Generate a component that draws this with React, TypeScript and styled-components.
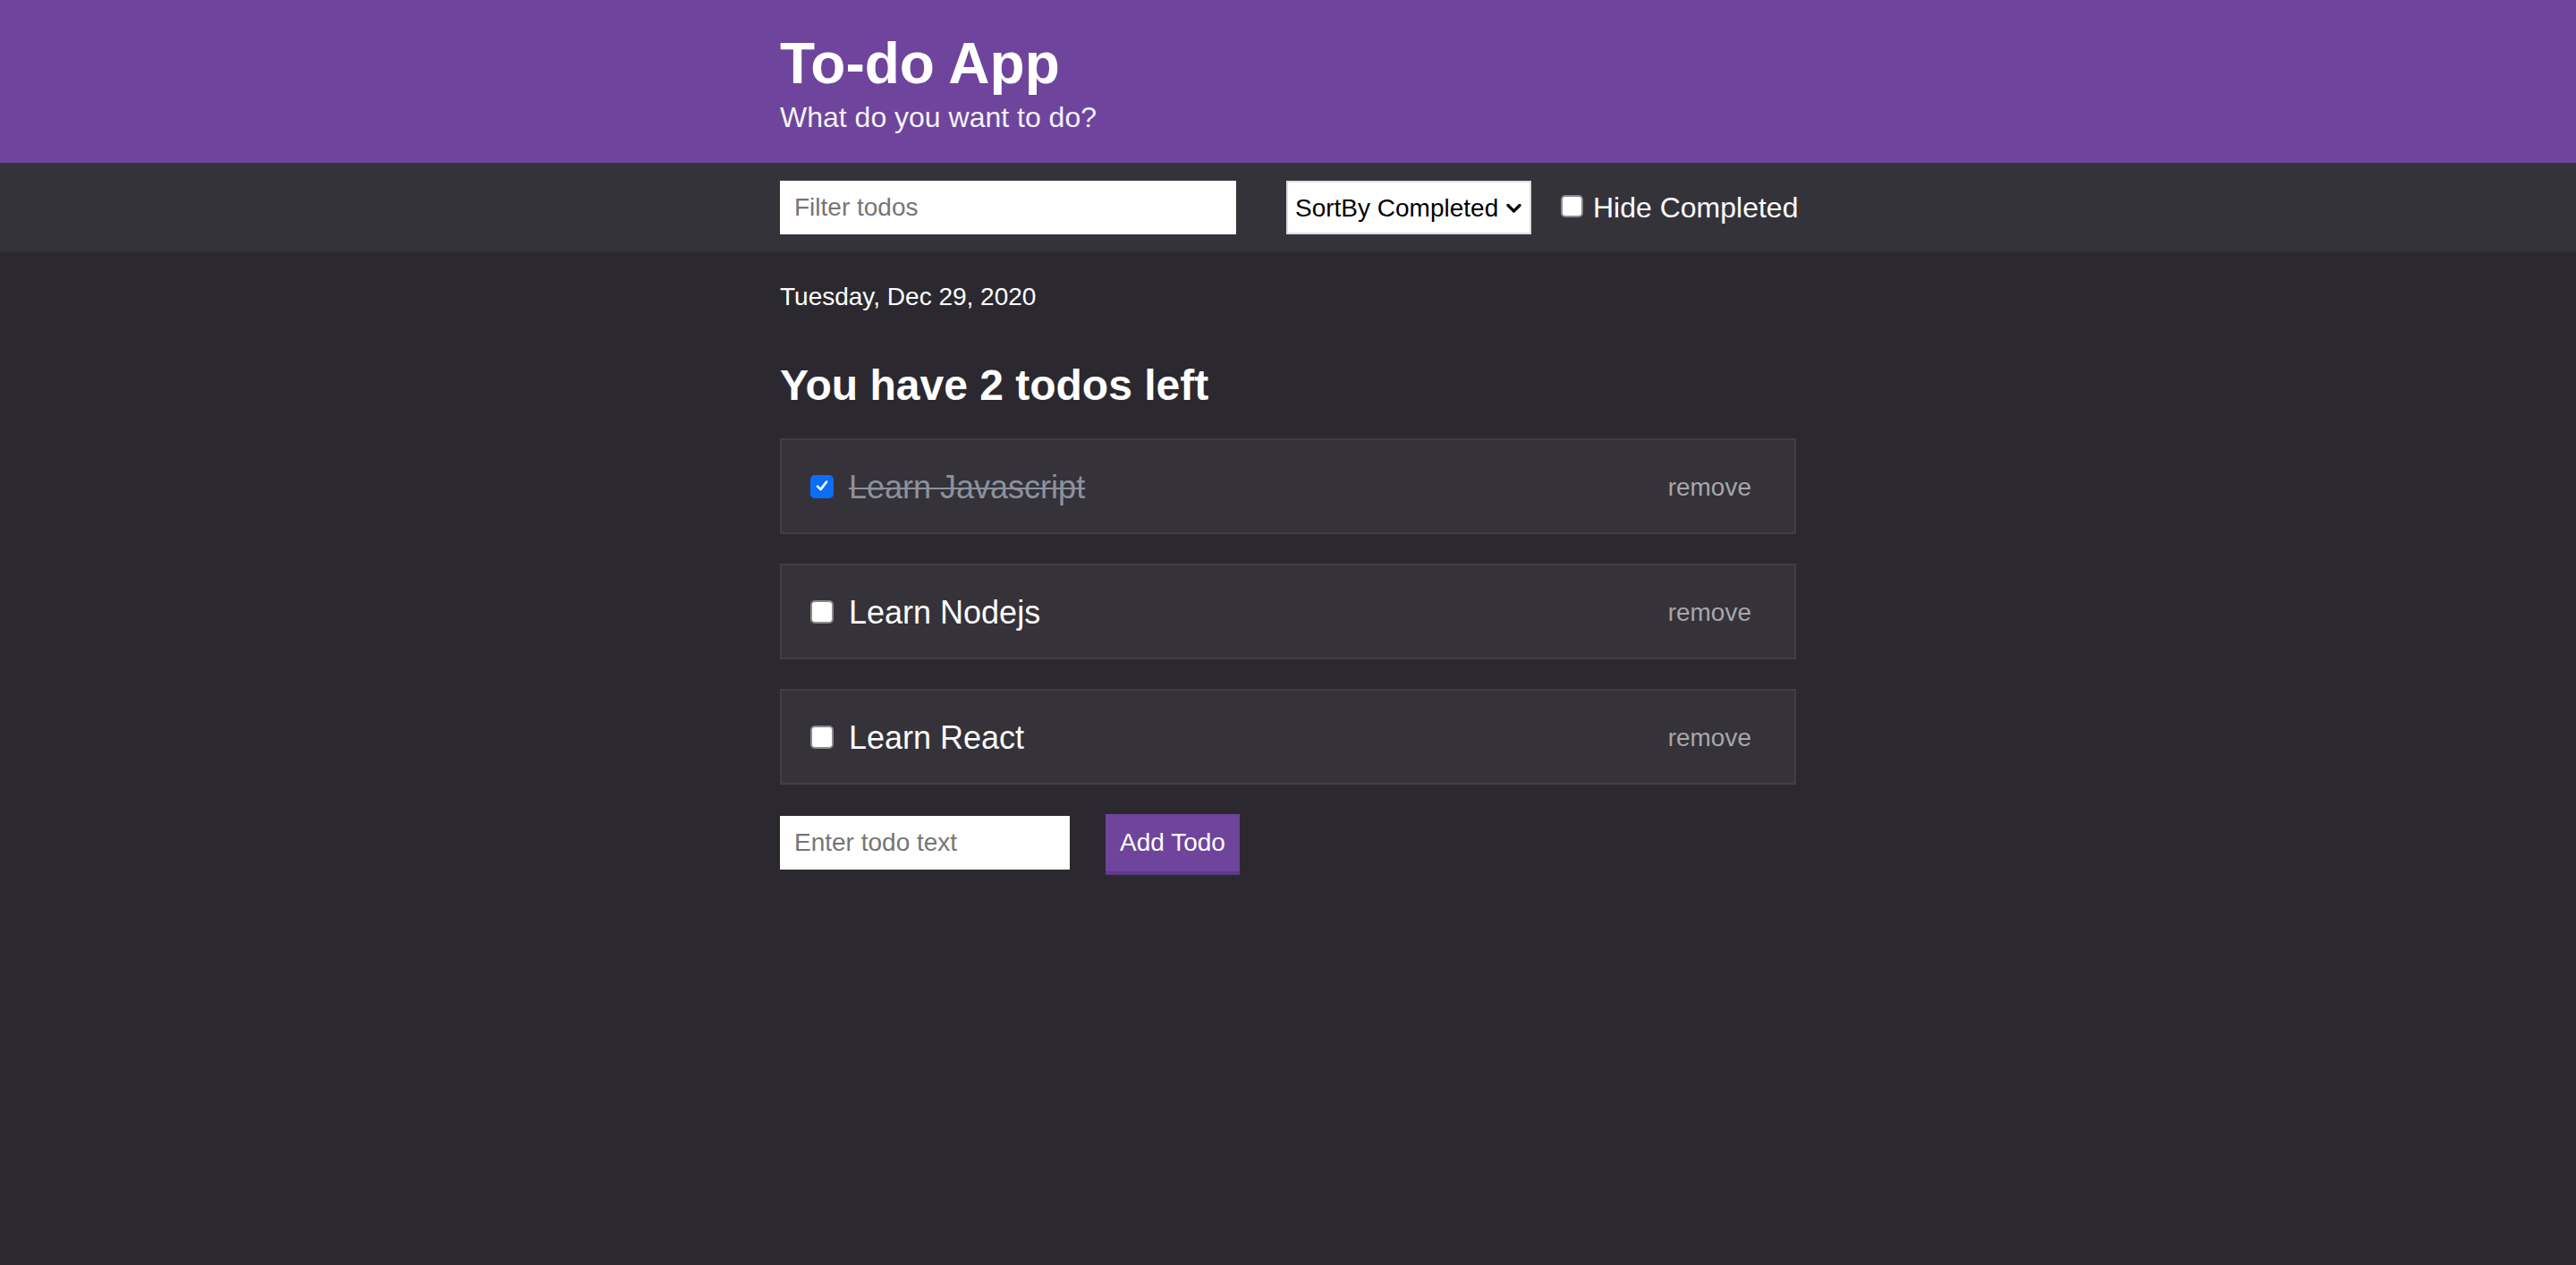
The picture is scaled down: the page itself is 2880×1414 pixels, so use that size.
import React, { useState } from 'react';
import styled, { createGlobalStyle } from 'styled-components';

const PURPLE = '#6f449c';

const GlobalStyle = createGlobalStyle`
  html, body {
    margin: 0;
    padding: 0;
    background: #2b292f;
  }
  body {
    font-family: "Liberation Sans", Arial, Helvetica, sans-serif;
    color: #ffffff;
  }
  * { box-sizing: border-box; }
`;

const Page = styled.div`
  min-height: 1414px;
  background: #2b292f;
`;

const Container = styled.div`
  width: 1136px;
  margin: 0 auto;
`;

const Header = styled.header`
  background: ${PURPLE};
  padding: 39px 0 31px;
`;

const Title = styled.h1`
  margin: 0;
  font-size: 64px;
  line-height: 64px;
  font-weight: 700;
  color: #ffffff;
`;

const Subtitle = styled.h2`
  margin: 8px 0 0;
  font-size: 32px;
  line-height: 40px;
  font-weight: 400;
  color: #f4f2f8;
`;

const Toolbar = styled.div`
  background: #35333a;
  padding: 20px 0;
`;

const ToolbarRow = styled(Container)`
  display: flex;
  align-items: center;
`;

const TextInput = styled.input<{ $width: number }>`
  flex: none;
  width: ${(p) => p.$width}px;
  height: 60px;
  border: none;
  outline: none;
  background: #ffffff;
  padding: 0 16px;
  font-family: "Liberation Sans", Arial, sans-serif;
  font-size: 28px;
  color: #222;
  &::placeholder {
    color: #757575;
  }
`;

const FilterInput = styled(TextInput)`
  margin-right: 56px;
`;

const SelectWrap = styled.div`
  position: relative;
  flex: none;
  margin-right: 33px;
`;

const Select = styled.select`
  appearance: none;
  -webkit-appearance: none;
  display: block;
  width: 274px;
  height: 60px;
  border: 2px solid #dddddd;
  border-radius: 0;
  background: #ffffff;
  padding: 0 30px 0 8px;
  font-family: "Liberation Sans", Arial, sans-serif;
  font-size: 28px;
  color: #000;
  outline: none;
`;

const Chevron = styled.svg`
  position: absolute;
  right: 11px;
  top: 50%;
  width: 17px;
  height: 12px;
  margin-top: -5px;
  pointer-events: none;
`;

const CheckLabel = styled.label`
  flex: none;
  display: flex;
  align-items: center;
  gap: 11px;
  font-size: 32px;
  line-height: 40px;
  white-space: nowrap;
  color: #ffffff;
  cursor: pointer;
`;

const Box = styled.span<{ $checked: boolean; $size: number; $lift?: number }>`
  flex: none;
  width: ${(p) => p.$size}px;
  height: ${(p) => p.$size}px;
  margin-top: ${(p) => -(p.$lift ?? 0)}px;
  border-radius: 5px;
  background: ${(p) => (p.$checked ? '#0b6ef6' : '#ffffff')};
  border: ${(p) => (p.$checked ? 'none' : '2px solid #8a8a8e')};
  display: flex;
  align-items: center;
  justify-content: center;
  cursor: pointer;
`;

const Main = styled(Container)`
  padding-top: 34px;
`;

const DateText = styled.p`
  margin: 0;
  font-size: 28px;
  line-height: 32px;
  color: #ffffff;
`;

const Heading = styled.h3`
  margin: 55px 0 31px;
  font-size: 48px;
  line-height: 56px;
  font-weight: 700;
  color: #ffffff;
`;

const TodoList = styled.div`
  display: flex;
  flex-direction: column;
  gap: 33px;
`;

const TodoCard = styled.div`
  height: 107px;
  border: 2px solid #403d46;
  background: #35323a;
  display: flex;
  align-items: center;
  padding: 0 48px 0 32px;
`;

const TodoText = styled.span<{ $done: boolean }>`
  flex: 1;
  margin-left: 17px;
  padding-top: 3px;
  font-size: 36px;
  line-height: 44px;
  color: ${(p) => (p.$done ? '#8c919c' : '#ffffff')};
  text-decoration: ${(p) => (p.$done ? 'line-through' : 'none')};
  text-decoration-thickness: 2px;
`;

const RemoveButton = styled.button`
  background: none;
  border: none;
  padding: 2px 0 0;
  font-family: "Liberation Sans", Arial, sans-serif;
  font-size: 28px;
  color: #a7a7a9;
  cursor: pointer;
`;

const AddForm = styled.form`
  margin-top: 33px;
  display: flex;
  align-items: flex-start;
`;

const AddInput = styled(TextInput)`
  margin-top: 2px;
  margin-right: 40px;
`;

const AddButton = styled.button`
  width: 150px;
  height: 68px;
  background: ${PURPLE};
  border: none;
  border-bottom: 4px solid #5f3a89;
  color: #ffffff;
  font-family: "Liberation Sans", Arial, sans-serif;
  font-size: 28px;
  padding: 0;
  cursor: pointer;
`;

function CheckBox({
  checked,
  size,
  lift,
  onToggle,
}: {
  checked: boolean;
  size: number;
  lift?: number;
  onToggle: () => void;
}) {
  return (
    <Box $checked={checked} $size={size} $lift={lift} onClick={onToggle} role="checkbox" aria-checked={checked}>
      {checked && (
        <svg width={size * 0.62} height={size * 0.62} viewBox="0 0 16 16">
          <path d="M3 8.5 L6.5 12 L13 3.5" fill="none" stroke="#fff" strokeWidth="2.6" strokeLinecap="round" strokeLinejoin="round" />
        </svg>
      )}
    </Box>
  );
}

type Todo = { id: number; text: string; completed: boolean };

export default function App() {
  const [todos, setTodos] = useState<Todo[]>([
    { id: 1, text: 'Learn Javascript', completed: true },
    { id: 2, text: 'Learn Nodejs', completed: false },
    { id: 3, text: 'Learn React', completed: false },
  ]);
  const [hide, setHide] = useState(false);
  const left = todos.filter((t) => !t.completed).length;
  const toggle = (id: number) =>
    setTodos((ts) => ts.map((t) => (t.id === id ? { ...t, completed: !t.completed } : t)));
  const remove = (id: number) => setTodos((ts) => ts.filter((t) => t.id !== id));
  const visible = hide ? todos.filter((t) => !t.completed) : todos;

  return (
    <Page>
      <GlobalStyle />
      <Header>
        <Container>
          <Title>To-do App</Title>
          <Subtitle>What do you want to do?</Subtitle>
        </Container>
      </Header>
      <Toolbar>
        <ToolbarRow>
          <FilterInput $width={510} placeholder="Filter todos" />
          <SelectWrap>
            <Select defaultValue="completed">
              <option value="completed">SortBy Completed</option>
              <option value="alpha">SortBy Alphabetical</option>
            </Select>
            <Chevron viewBox="0 0 17 12">
              <path d="M2 2.5 L8.5 9 L15 2.5" fill="none" stroke="#000" strokeWidth="3.2" strokeLinecap="round" strokeLinejoin="round" />
            </Chevron>
          </SelectWrap>
          <CheckLabel>
            <CheckBox checked={hide} size={25} lift={4} onToggle={() => setHide((h) => !h)} />
            Hide Completed
          </CheckLabel>
        </ToolbarRow>
      </Toolbar>
      <Main>
        <DateText>Tuesday, Dec 29, 2020</DateText>
        <Heading>You have {left} todos left</Heading>
        <TodoList>
          {visible.map((t) => (
            <TodoCard key={t.id}>
              <CheckBox checked={t.completed} size={26} onToggle={() => toggle(t.id)} />
              <TodoText $done={t.completed}>{t.text}</TodoText>
              <RemoveButton type="button" onClick={() => remove(t.id)}>remove</RemoveButton>
            </TodoCard>
          ))}
        </TodoList>
        <AddForm onSubmit={(e) => e.preventDefault()}>
          <AddInput $width={324} placeholder="Enter todo text" />
          <AddButton type="submit">Add Todo</AddButton>
        </AddForm>
      </Main>
    </Page>
  );
}
